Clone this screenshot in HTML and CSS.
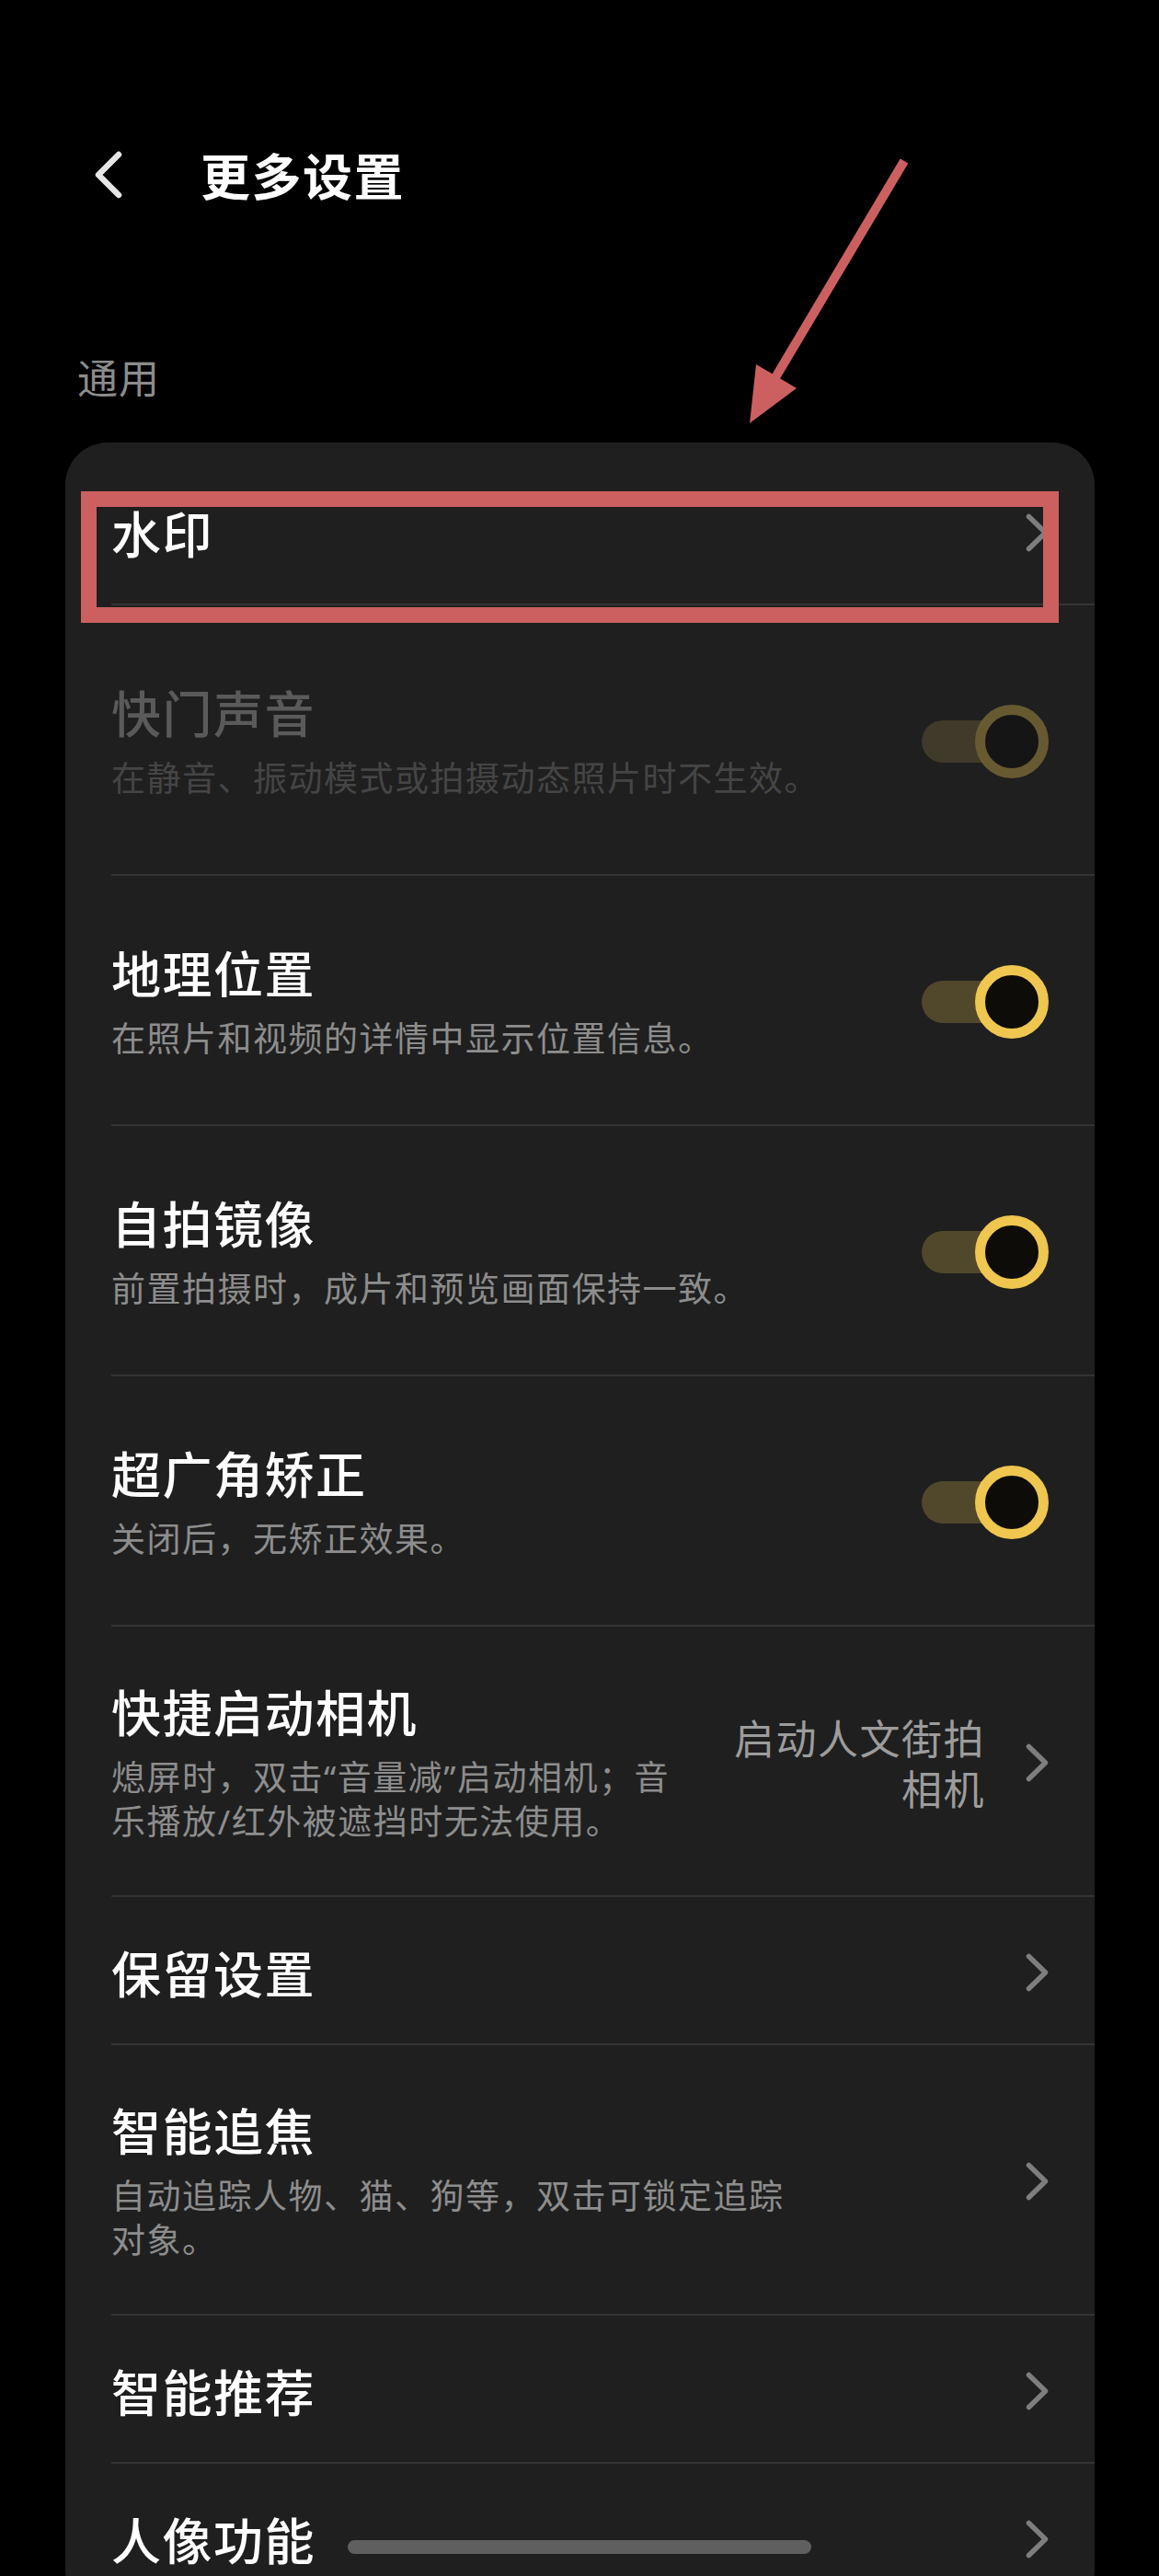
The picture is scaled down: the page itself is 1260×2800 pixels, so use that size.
FILE: index.html
```html
<!DOCTYPE html>
<html lang="zh-CN">
<head>
<meta charset="utf-8">
<title>更多设置</title>
<link rel="stylesheet" href="styles.css">
</head>
<body>
<div class="page">
  <header class="header">
    <svg class="back" width="32" height="52" viewBox="0 0 32 52"><path d="M27 4 L5 26 L27 48" fill="none" stroke="#e6e6e6" stroke-width="6.5" stroke-linecap="round" stroke-linejoin="round"/></svg>
    <h1 class="title">更多设置</h1>
  </header>

  <div class="section-label">通用</div>

  <div class="card">
    <div class="row">
      <div class="row-inner h-plain">
        <div class="text"><div class="name">水印</div></div>
        <svg class="chev" width="25" height="42" viewBox="0 0 25 42"><path d="M3.5 3.5 L21.5 21 L3.5 38.5" fill="none" stroke="#7e7e7e" stroke-width="5.5" stroke-linecap="round" stroke-linejoin="round"/></svg>
      </div>
    </div>

    <div class="row disabled">
      <div class="row-inner h-taller">
        <div class="text">
          <div class="name">快门声音</div>
          <div class="sub">在静音、振动模式或拍摄动态照片时不生效。</div>
        </div>
        <div class="toggle off-dim"><span class="track"></span><span class="knob"></span></div>
      </div>
    </div>

    <div class="row">
      <div class="row-inner h-tall">
        <div class="text">
          <div class="name">地理位置</div>
          <div class="sub">在照片和视频的详情中显示位置信息。</div>
        </div>
        <div class="toggle"><span class="track"></span><span class="knob"></span></div>
      </div>
    </div>

    <div class="row">
      <div class="row-inner h-tall">
        <div class="text">
          <div class="name">自拍镜像</div>
          <div class="sub">前置拍摄时，成片和预览画面保持一致。</div>
        </div>
        <div class="toggle"><span class="track"></span><span class="knob"></span></div>
      </div>
    </div>

    <div class="row">
      <div class="row-inner h-tall">
        <div class="text">
          <div class="name">超广角矫正</div>
          <div class="sub">关闭后，无矫正效果。</div>
        </div>
        <div class="toggle"><span class="track"></span><span class="knob"></span></div>
      </div>
    </div>

    <div class="row">
      <div class="row-inner h-taller">
        <div class="text">
          <div class="name">快捷启动相机</div>
          <div class="sub">熄屏时，双击“音量减”启动相机；音乐播放/红外被遮挡时无法使用。</div>
        </div>
        <div class="value">启动人文街拍相机</div>
        <svg class="chev" width="25" height="42" viewBox="0 0 25 42"><path d="M3.5 3.5 L21.5 21 L3.5 38.5" fill="none" stroke="#7e7e7e" stroke-width="5.5" stroke-linecap="round" stroke-linejoin="round"/></svg>
      </div>
    </div>

    <div class="row">
      <div class="row-inner h-plain">
        <div class="text"><div class="name">保留设置</div></div>
        <svg class="chev" width="25" height="42" viewBox="0 0 25 42"><path d="M3.5 3.5 L21.5 21 L3.5 38.5" fill="none" stroke="#7e7e7e" stroke-width="5.5" stroke-linecap="round" stroke-linejoin="round"/></svg>
      </div>
    </div>

    <div class="row">
      <div class="row-inner h-taller">
        <div class="text">
          <div class="name">智能追焦</div>
          <div class="sub sub-narrow">自动追踪人物、猫、狗等，双击可锁定追踪对象。</div>
        </div>
        <svg class="chev" width="25" height="42" viewBox="0 0 25 42"><path d="M3.5 3.5 L21.5 21 L3.5 38.5" fill="none" stroke="#7e7e7e" stroke-width="5.5" stroke-linecap="round" stroke-linejoin="round"/></svg>
      </div>
    </div>

    <div class="row">
      <div class="row-inner h-plain">
        <div class="text"><div class="name">智能推荐</div></div>
        <svg class="chev" width="25" height="42" viewBox="0 0 25 42"><path d="M3.5 3.5 L21.5 21 L3.5 38.5" fill="none" stroke="#7e7e7e" stroke-width="5.5" stroke-linecap="round" stroke-linejoin="round"/></svg>
      </div>
    </div>

    <div class="row">
      <div class="row-inner h-plain">
        <div class="text"><div class="name">人像功能</div></div>
        <svg class="chev" width="25" height="42" viewBox="0 0 25 42"><path d="M3.5 3.5 L21.5 21 L3.5 38.5" fill="none" stroke="#7e7e7e" stroke-width="5.5" stroke-linecap="round" stroke-linejoin="round"/></svg>
      </div>
    </div>
  </div>

  <div class="highlight-box"></div>
  <svg class="annot-arrow" width="230" height="320" viewBox="0 0 230 320">
    <line x1="203" y1="15" x2="62" y2="252" stroke="#cc6060" stroke-width="10"/>
    <polygon points="35,300 42,236 86,262" fill="#cc6060"/>
  </svg>
  <div class="home-bar"></div>
</div>
</body>
</html>
```

FILE: styles.css
```css
html, body {
  margin: 0;
  padding: 0;
  background: #000;
  overflow: hidden;
}

body {
  font-family: "Noto Sans CJK SC", "Noto Sans", sans-serif;
  color: #f4f4f4;
}

.page {
  position: relative;
  width: 1260px;
  height: 2800px;
  overflow: hidden;
}

.header {
  display: flex;
  align-items: center;
  height: 100px;
  margin-top: 140px;
  padding-left: 102px;
}

.back {
  display: block;
  flex: none;
}

.title {
  margin: 0 0 0 84px;
  font-size: 54px;
  font-weight: 700;
  line-height: 1;
  letter-spacing: 1.5px;
  color: #fff;
}

.section-label {
  margin: 139px 0 0 84px;
  font-size: 44px;
  line-height: 60px;
  letter-spacing: 1px;
  color: #8c8c8c;
}

.card {
  margin: 42px 70px 0 71px;
  padding-top: 16px;
  background: #1f1f1f;
  border-radius: 46px;
}

.row {
  padding-left: 50px;
}

.row-inner {
  box-sizing: border-box;
  display: flex;
  align-items: center;
  padding: 4px 50px 0 0;
  border-bottom: 2px solid #343434;
}

.h-plain { min-height: 161px; }
.h-tall { min-height: 272px; }
.h-taller { min-height: 294px; }

.text {
  flex: 1;
  min-width: 0;
}

.name {
  font-size: 54px;
  font-weight: 500;
  line-height: 64px;
  letter-spacing: 1.5px;
  color: #fff;
}

.sub {
  margin-top: 16px;
  font-family: "Noto Sans", "Noto Sans CJK SC", sans-serif;
  font-size: 37px;
  line-height: 48px;
  letter-spacing: 1.5px;
  color: #8d8d8d;
}

.sub-narrow {
  max-width: 740px;
}

.disabled .name { color: #5a5a5a; }
.disabled .sub { color: #454545; }

.value {
  flex: none;
  width: 276px;
  margin-left: 42px;
  text-align: right;
  font-size: 44px;
  line-height: 55px;
  letter-spacing: 1.5px;
  color: #9c9c9c;
}

.chev {
  display: block;
  flex: none;
  margin-left: 44px;
}

.toggle {
  position: relative;
  flex: none;
  width: 138px;
  height: 80px;
  margin-left: 30px;
}

.track {
  position: absolute;
  left: 0;
  top: 17px;
  width: 100px;
  height: 46px;
  border-radius: 23px;
  background: #51472b;
}

.knob {
  position: absolute;
  right: 0;
  top: 0;
  box-sizing: border-box;
  width: 80px;
  height: 80px;
  border-radius: 50%;
  border: 11px solid #eec650;
  background: #0e0c08;
}

.off-dim .track { background: #3f3a29; }
.off-dim .knob {
  border-color: #675a31;
  background: #151515;
}

.highlight-box {
  position: absolute;
  left: 88px;
  top: 534px;
  box-sizing: border-box;
  width: 1063px;
  height: 143px;
  border: 17px solid #cc6060;
}

.annot-arrow {
  position: absolute;
  left: 780px;
  top: 160px;
}

.home-bar {
  position: absolute;
  left: 378px;
  top: 2761px;
  width: 504px;
  height: 15px;
  border-radius: 8px;
  background: #5f5f5f;
}
```
